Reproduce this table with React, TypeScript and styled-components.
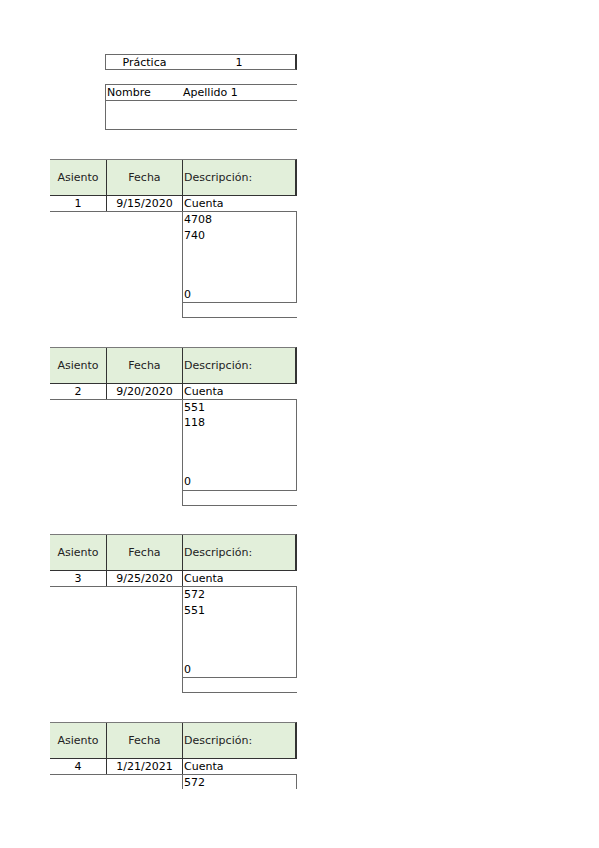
import React from "react";
import styled, { createGlobalStyle } from "styled-components";

const Global = createGlobalStyle`
  html, body { margin: 0; padding: 0; background: #ffffff; }
  body { font-family: "DejaVu Sans", "Liberation Sans", sans-serif; font-size: 11px; color: #000; }
`;

const Page = styled.div`
  height: 789px;
  overflow: hidden;
  padding-left: 50px;
  padding-top: 54px;
  box-sizing: border-box;
`;

const Sheet = styled.div`
  width: 247px;
  display: flex;
  flex-direction: column;
`;

const PracticaBox = styled.div`
  margin-left: 55px;
  height: 16px;
  box-sizing: border-box;
  display: grid;
  grid-template-columns: 77px 1fr;
  border-top: 1px solid #6a6a6a;
  border-bottom: 1px solid #6a6a6a;
  border-left: 1px solid #6a6a6a;
  border-right: 2px solid #333;
`;

const Cell = styled.div<{ $align?: "left" | "center" }>`
  display: flex;
  align-items: center;
  justify-content: ${(p) => (p.$align === "left" ? "flex-start" : "center")};
  padding-left: ${(p) => (p.$align === "left" ? "1px" : "0")};
  line-height: 1;
  white-space: nowrap;
  overflow: hidden;
`;

const NameBox = styled.div`
  margin-left: 55px;
  margin-top: 14px;
  height: 46px;
  box-sizing: border-box;
  border-top: 1px solid #6a6a6a;
  border-bottom: 1px solid #6a6a6a;
  border-left: 1px solid #6a6a6a;
  display: flex;
  flex-direction: column;
`;

const NameRow = styled.div`
  height: 16px;
  box-sizing: border-box;
  border-bottom: 1px solid #6a6a6a;
  display: grid;
  grid-template-columns: 76px 1fr;
`;

const Section = styled.div`
  margin-top: 29px;
  display: flex;
  flex-direction: column;
  &:nth-of-type(n + 4) {
    margin-top: 28.6px;
  }
`;

const Header = styled.div`
  height: 37px;
  box-sizing: border-box;
  background: #e2efda;
  border-top: 1px solid #7a7a7a;
  border-bottom: 1px solid #333;
  border-right: 2px solid #333;
  display: grid;
  grid-template-columns: 56px 76px 1fr;
  color: #222;
`;

const HeadCell = styled(Cell)`
  & + & {
    border-left: 1px solid #333;
  }
`;

const DataRow = styled.div`
  height: 16px;
  box-sizing: border-box;
  border-bottom: 1px solid #6a6a6a;
  display: grid;
  grid-template-columns: 56px 76px 1fr;
`;

const RowCell = styled(Cell)`
  & + & {
    border-left: 1px solid #333;
  }
`;

const AccountBox = styled.div`
  margin-left: 132px;
  height: 91px;
  box-sizing: border-box;
  border-left: 1px solid #6a6a6a;
  border-right: 1px solid #6a6a6a;
  border-bottom: 1px solid #6a6a6a;
  display: flex;
  flex-direction: column;
  padding-left: 1px;
`;

const Line = styled.div`
  height: 15.5px;
  line-height: 15.5px;
  white-space: nowrap;
`;

const Spacer = styled.div`
  flex: 1;
`;

const TotalRow = styled.div`
  margin-left: 132px;
  height: 15px;
  box-sizing: border-box;
  border-left: 1px solid #6a6a6a;
  border-bottom: 1px solid #6a6a6a;
`;

type Entry = { n: string; date: string; accounts: string[] };

const entries: Entry[] = [
  { n: "1", date: "9/15/2020", accounts: ["4708", "740"] },
  { n: "2", date: "9/20/2020", accounts: ["551", "118"] },
  { n: "3", date: "9/25/2020", accounts: ["572", "551"] },
  { n: "4", date: "1/21/2021", accounts: ["572"] },
];

export default function App() {
  return (
    <>
      <Global />
      <Page>
        <Sheet>
          <PracticaBox>
            <Cell>Práctica</Cell>
            <Cell>1</Cell>
          </PracticaBox>
          <NameBox>
            <NameRow>
              <Cell $align="left">Nombre</Cell>
              <Cell $align="left">Apellido 1</Cell>
            </NameRow>
          </NameBox>
          {entries.map((e) => (
            <Section key={e.n}>
              <Header>
                <HeadCell>Asiento</HeadCell>
                <HeadCell>Fecha</HeadCell>
                <HeadCell $align="left">Descripción:</HeadCell>
              </Header>
              <DataRow>
                <RowCell>{e.n}</RowCell>
                <RowCell>{e.date}</RowCell>
                <RowCell $align="left">Cuenta</RowCell>
              </DataRow>
              <AccountBox>
                {e.accounts.map((a, i) => (
                  <Line key={i}>{a}</Line>
                ))}
                <Spacer />
                <Line>0</Line>
              </AccountBox>
              <TotalRow />
            </Section>
          ))}
        </Sheet>
      </Page>
    </>
  );
}
